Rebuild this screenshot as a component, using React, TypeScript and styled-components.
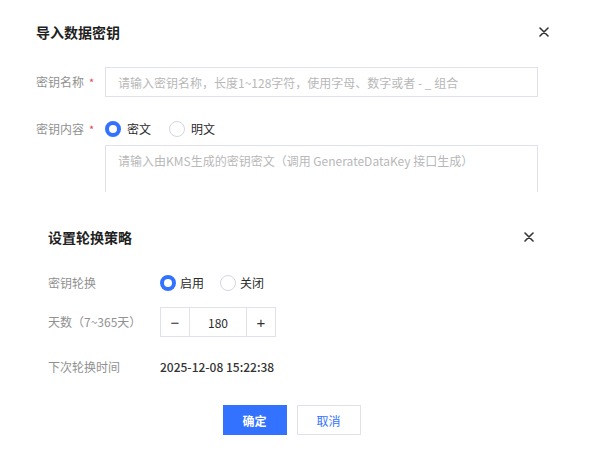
import React from "react";
import styled, { createGlobalStyle } from "styled-components";

const GlobalStyle = createGlobalStyle`
  html, body { margin: 0; padding: 0; background: #fff; }
  body {
    font-family: "Noto Sans CJK SC", "Noto Sans", "Liberation Sans", sans-serif;
    font-size: 12px;
    color: #333;
  }
  * { box-sizing: border-box; }
`;

const BLUE = "#3372ff";
const BORDER = "#dfe2ec";

const Page = styled.div`
  width: 600px;
  height: 451px;
  display: flex;
  flex-direction: column;
  overflow: hidden;
`;

const Dialog = styled.section<{ $h: number; $pt: number; $pl: number; $pr: number }>`
  height: ${(p) => p.$h}px;
  padding: ${(p) => p.$pt}px ${(p) => p.$pr}px 0 ${(p) => p.$pl}px;
  overflow: hidden;
  display: flex;
  flex-direction: column;
  flex-shrink: 0;
`;

const Header = styled.header`
  height: 20px;
  display: flex;
  align-items: center;
  justify-content: space-between;
`;

const Title = styled.h2`
  margin: 0;
  font-size: 14px;
  line-height: 20px;
  font-weight: 700;
  color: #1f1f1f;
`;

const CloseBtn = styled.button`
  border: 0;
  background: none;
  padding: 0;
  width: 12px;
  height: 12px;
  display: flex;
  align-items: center;
  justify-content: center;
  cursor: pointer;
`;

const Form = styled.div<{ $label: number; $mt: number; $gap: number }>`
  margin-top: ${(p) => p.$mt}px;
  display: grid;
  grid-template-columns: ${(p) => p.$label}px 1fr;
  row-gap: ${(p) => p.$gap}px;
  align-items: center;
`;

const Label = styled.div<{ $self?: string; $mt?: number }>`
  font-size: 12px;
  line-height: 20px;
  color: #919191;
  align-self: ${(p) => p.$self || "center"};
  margin-top: ${(p) => p.$mt || 0}px;
  display: flex;
  align-items: center;
  white-space: nowrap;
`;

const Req = styled.span`
  color: #e5484d;
  margin-left: 5px;
  font-size: 11px;
`;

const Input = styled.div<{ $w: number }>`
  width: ${(p) => p.$w}px;
  height: 30px;
  border: 1px solid ${BORDER};
  padding: 0 12px;
  display: flex;
  align-items: center;
  color: #b8b8b8;
  font-size: 12px;
  white-space: nowrap;
`;

const Stack = styled.div`
  display: flex;
  flex-direction: column;
  gap: 6px;
`;

const TextArea = styled.div<{ $w: number }>`
  width: ${(p) => p.$w}px;
  height: 90px;
  border: 1px solid ${BORDER};
  padding: 6px 12px;
  color: #b8b8b8;
  font-size: 12px;
  line-height: 18px;
  white-space: nowrap;
`;

const RadioGroup = styled.div<{ $gap: number }>`
  display: flex;
  align-items: center;
  gap: ${(p) => p.$gap}px;
  height: 20px;
`;

const RadioItem = styled.label<{ $gap: number }>`
  display: flex;
  align-items: center;
  gap: ${(p) => p.$gap}px;
  font-size: 12px;
  color: #2b2b2b;
  line-height: 20px;
`;

const Dot = styled.span<{ $on?: boolean }>`
  width: 16px;
  height: 16px;
  border-radius: 50%;
  background: #fff;
  border: ${(p) => (p.$on ? `4px solid ${BLUE}` : "1px solid #d3d7e0")};
  flex-shrink: 0;
`;

const Stepper = styled.div<{ $mt: number }>`
  width: 116px;
  height: 30px;
  margin-top: ${(p) => p.$mt}px;
  border: 1px solid ${BORDER};
  display: grid;
  grid-template-columns: 29px 1fr 29px;
`;

const StepBtn = styled.button`
  border: 0;
  background: #fff;
  padding: 0;
  font-size: 15px;
  color: #333;
  font-family: "Liberation Sans", sans-serif;
  display: flex;
  align-items: center;
  justify-content: center;
  &:first-child { border-right: 1px solid ${BORDER}; }
  &:last-child { border-left: 1px solid ${BORDER}; }
`;

const StepValue = styled.div`
  display: flex;
  align-items: center;
  justify-content: center;
  font-size: 12px;
  color: #2b2b2b;
`;

const Value = styled.div<{ $mt: number }>`
  margin-top: ${(p) => p.$mt}px;
  font-size: 12px;
  line-height: 20px;
  color: #333;
  font-weight: 500;
`;

const Footer = styled.div`
  margin-top: 28px;
  display: flex;
  justify-content: center;
  gap: 10px;
`;

const Btn = styled.button<{ $primary?: boolean }>`
  width: 64px;
  height: 30px;
  font-family: inherit;
  font-size: 12px;
  font-weight: ${(p) => (p.$primary ? 700 : 400)};
  color: ${(p) => (p.$primary ? "#fff" : BLUE)};
  background: ${(p) => (p.$primary ? BLUE : "#fff")};
  border: 1px solid ${(p) => (p.$primary ? BLUE : BORDER)};
  padding: 0;
  cursor: pointer;
`;

const CloseIcon = () => (
  <svg width="10" height="10" viewBox="0 0 10 10">
    <path d="M1 1L9 9M9 1L1 9" stroke="#333" strokeWidth="1.6" strokeLinecap="round" />
  </svg>
);

export default function App() {
  return (
    <>
      <GlobalStyle />
      <Page>
        <Dialog $h={192} $pt={22} $pl={36} $pr={50}>
          <Header>
            <Title>导入数据密钥</Title>
            <CloseBtn aria-label="关闭"><CloseIcon /></CloseBtn>
          </Header>
          <Form $label={69} $mt={25} $gap={22}>
            <Label>密钥名称<Req>*</Req></Label>
            <Input $w={433}>请输入密钥名称，长度1~128字符，使用字母、数字或者 - _ 组合</Input>
            <Label $self="start">密钥内容<Req>*</Req></Label>
            <Stack>
              <RadioGroup $gap={18}>
                <RadioItem $gap={6}><Dot $on />密文</RadioItem>
                <RadioItem $gap={6}><Dot />明文</RadioItem>
              </RadioGroup>
              <TextArea $w={433}>请输入由KMS生成的密钥密文（调用 GenerateDataKey 接口生成）</TextArea>
            </Stack>
          </Form>
        </Dialog>
        <Dialog $h={259} $pt={35} $pl={48} $pr={65}>
          <Header>
            <Title>设置轮换策略</Title>
            <CloseBtn aria-label="关闭"><CloseIcon /></CloseBtn>
          </Header>
          <Form $label={112} $mt={26} $gap={0}>
            <Label>密钥轮换</Label>
            <RadioGroup $gap={16}>
              <RadioItem $gap={4}><Dot $on />启用</RadioItem>
              <RadioItem $gap={4}><Dot />关闭</RadioItem>
            </RadioGroup>
            <Label $mt={14}>天数（7~365天）</Label>
            <Stepper $mt={14}>
              <StepBtn>−</StepBtn>
              <StepValue>180</StepValue>
              <StepBtn>+</StepBtn>
            </Stepper>
            <Label $mt={20}>下次轮换时间</Label>
            <Value $mt={20}>2025-12-08 15:22:38</Value>
          </Form>
          <Footer>
            <Btn $primary>确定</Btn>
            <Btn>取消</Btn>
          </Footer>
        </Dialog>
      </Page>
    </>
  );
}
